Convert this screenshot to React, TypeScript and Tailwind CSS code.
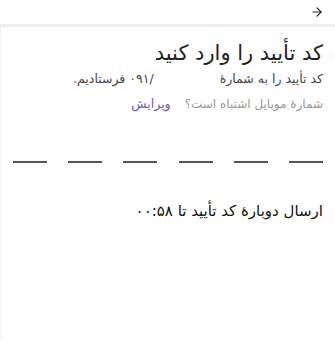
import { ArrowRight } from "lucide-react";

const slots = [0, 1, 2, 3, 4, 5];

export default function App() {
  return (
    <div dir="rtl" className="h-[343px] w-[335px] bg-white font-['DejaVu_Sans',sans-serif] text-[#222]">
      <header className="flex h-[27px] items-center border-b-[3px] border-[#eeeeee] px-[11px]">
        <ArrowRight size={14} strokeWidth={2} className="text-[#222]" />
      </header>
      <main className="h-[313px] border-l border-[#f2f2f2] px-3 pt-[12px]">
        <h1 className="text-[21px] leading-[28px] font-normal">کد تأیید را وارد کنید</h1>
        <p className="mt-[3px] flex items-baseline text-[12.5px] leading-[18px] text-[#444]">
          <span>کد تأیید را به شمارهٔ</span>
          <span dir="ltr" className="mr-[66px] ml-[4px] inline-flex">
            <span>۰۹۱</span>
            <span>/</span>
          </span>
          <span>فرستادیم.</span>
        </p>
        <p className="mt-[7px] text-[12px] leading-[18px] text-[#999]">
          شمارهٔ موبایل اشتباه است؟
          <button className="mr-[14px] text-[12.5px] text-[#6b5ca5]">ویرایش</button>
        </p>
        <div dir="ltr" className="mt-[48px] flex justify-between">
          {slots.map((i) => (
            <div key={i} className="h-[1.5px] w-[34px] bg-[#555]" />
          ))}
        </div>
        <p className="mt-[38px] text-[15px] leading-[20px] font-normal text-[#111]">ارسال دوبارهٔ کد تأیید تا ۰۰:۵۸</p>
      </main>
    </div>
  );
}
